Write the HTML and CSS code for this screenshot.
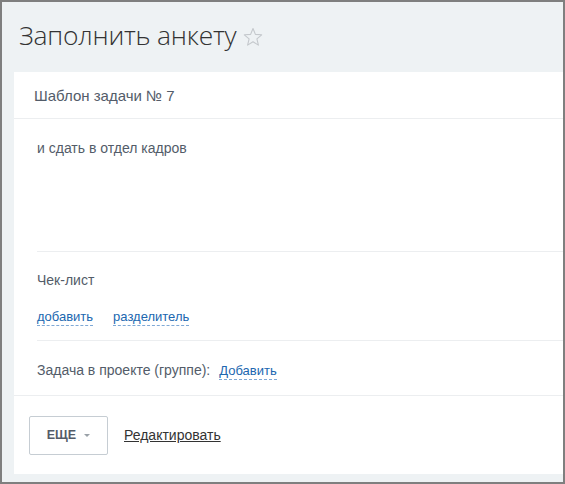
FILE: index.html
```html
<!DOCTYPE html>
<html lang="ru">
<head>
<meta charset="utf-8">
<link rel="stylesheet" href="styles.css">
</head>
<body>
<div class="frame">
  <div class="page-head">
    <h1 class="title">Заполнить анкету</h1>
    <svg class="star" viewBox="0 0 20 20" width="20" height="20"><polygon points="10,1.5 12.4,7.4 18.7,7.8 13.9,11.9 15.4,18.1 10,14.7 4.6,18.1 6.1,11.9 1.3,7.8 7.6,7.4" fill="none" stroke="#c4c8cc" stroke-width="1.1" stroke-linejoin="round"/></svg>
  </div>
  <div class="card">
    <div class="card-head">Шаблон задачи № 7</div>
    <div class="card-body">
      <div class="descr">и сдать в отдел кадров</div>
      <div class="checklist">
        <div class="label">Чек-лист</div>
        <div class="links"><span class="dash-link">добавить</span><span class="dash-link">разделитель</span></div>
      </div>
      <div class="project">
        <span class="label">Задача в проекте (группе):</span><span class="dash-link">Добавить</span>
      </div>
    </div>
    <div class="card-foot">
      <div class="btn-more">ЕЩЕ <span class="caret"></span></div>
      <span class="edit-link">Редактировать</span>
    </div>
  </div>
</div>
</body>
</html>
```
FILE: styles.css
```css
* { box-sizing: border-box; }
html, body { margin: 0; padding: 0; }
body { width: 565px; height: 484px; font-family: "Liberation Sans", Arial, sans-serif; }
.frame {
  width: 565px; height: 484px;
  border: 2px solid #7f7f7f;
  background: #eef2f4;
  display: flex; flex-direction: column;
  padding-bottom: 8px;
}
.page-head {
  height: 70px;
  display: flex; align-items: center;
  padding-left: 17px;
  padding-bottom: 4px;
}
.title {
  margin: 0;
  font-family: "Open Sans", sans-serif;
  font-weight: 300;
  font-size: 26.4px;
  color: #333;
  letter-spacing: -0.2px;
}
.star { margin-left: 7px; margin-top: 3px; }
.card {
  flex: 1;
  margin-left: 12px;
  background: #fff;
  display: flex; flex-direction: column;
}
.card-head {
  height: 47px;
  border-bottom: 1px solid #eceef0;
  padding-left: 20px;
  display: flex; align-items: center;
  font-size: 15px; color: #535c69;
}
.card-body { padding-left: 23px; }
.descr {
  height: 133px;
  padding-top: 21px;
  font-size: 14px; color: #535c69;
  border-bottom: 1px solid #eceef0;
}
.checklist {
  height: 89px;
  border-bottom: 1px solid #eceef0;
  padding-top: 20px;
}
.label { font-size: 14px; color: #535c69; }
.links { margin-top: 21px; display: flex; gap: 20px; }
.dash-link {
  font-size: 13px; color: #2067b0;
  border-bottom: 1px dashed #7fa9d6;
  line-height: 16px;
}
.project {
  height: 54px;
  padding-top: 21px;
  display: flex; align-items: baseline; gap: 9px;
}
.card-foot {
  border-top: 1px solid #eceef0;
  flex: 1;
  display: flex; align-items: center;
  padding-left: 15px;
}
.btn-more {
  width: 79px; height: 39px;
  border: 1px solid #c6cdd3;
  border-radius: 2px;
  display: flex; align-items: center; justify-content: center;
  font-size: 12.5px; font-weight: bold; color: #535c69;
  gap: 8px;
}
.caret {
  width: 0; height: 0;
  border-left: 3px solid transparent;
  border-right: 3px solid transparent;
  border-top: 3px solid #9aa1a8;
}
.edit-link {
  margin-left: 16px;
  font-size: 14px; color: #333;
  text-decoration: underline;
}
```
